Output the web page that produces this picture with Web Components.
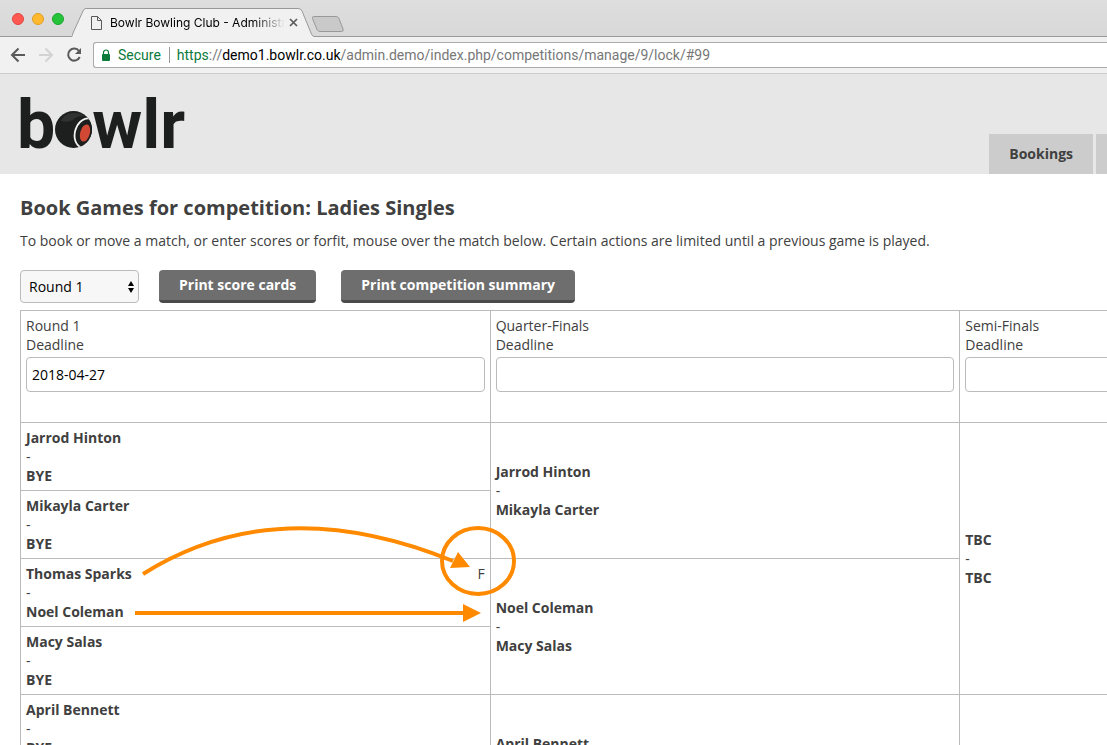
<!DOCTYPE html>
<html lang="en">
<head>
<meta charset="utf-8">
<title>Bowlr Bowling Club - Administration</title>
<style>
	body {
		margin: 0;
		height: 100vh;
		overflow: hidden;
		background: white;
		color: #404040;
		font: 14px/19px "Open Sans", sans-serif;
	}
</style>
</head>
<body>

<browser-window>
	<span slot="title">Bowlr Bowling Club - Administration</span>
	<span slot="scheme">https</span>
	<span slot="host">demo1.bowlr.co.uk</span>
	<span slot="path">/admin.demo/index.php/competitions/manage/9/lock/#99</span>

	<site-header>
		<nav-tab href="#bookings">Bookings</nav-tab>
		<nav-tab href="#more"></nav-tab>
	</site-header>

	<competition-page>
		<span slot="heading">Book Games for competition: Ladies Singles</span>
		<span slot="intro">To book or move a match, or enter scores or forfit, mouse over the match below. Certain actions are limited until a previous game is played.</span>
		<round-select slot="controls"></round-select>
		<push-button slot="controls">Print score cards</push-button>
		<push-button slot="controls">Print competition summary</push-button>
		<competition-draw></competition-draw>
	</competition-page>
</browser-window>

<script>
customElements.define('browser-window',
	class extends HTMLElement
	{
		constructor()
		{
			super();
			const shadowRoot = this.attachShadow({mode: 'open'});

			shadowRoot.innerHTML = `
				<style>
					:host {
						display: block;
					}
					.tabs {
						display: flex;
						height: 37px;
						padding-left: 12px;
						background: linear-gradient(#dedede, #d8d8d8);
						box-shadow: inset 0 -1px #999;
						font: 12px/28px Inter, sans-serif;
						color: black;
					}
					.lights {
						display: flex;
						gap: 8px;
						align-items: center;
						padding-top: 1px;
					}
					.lights i {
						box-sizing: border-box;
						width: 12px;
						height: 12px;
						border: 1px solid #e2463f;
						border-radius: 50%;
						background: #ff5850;
					}
					.lights i:nth-child(2) {
						border-color: #e09e27;
						background: #ffb92e;
					}
					.lights i:nth-child(3) {
						border-color: #1aa62e;
						background: #24c33a;
					}
					.tab {
						display: grid;
						grid-template: 37px / 244px;
						margin-left: 8px;
					}
					.tab > * {
						grid-area: 1 / 1;
					}
					.label {
						display: flex;
						align-items: center;
						padding: 8px 18px 0 19px;
					}
					.title {
						flex: 1;
						margin: 0 4px 0 8px;
						overflow: hidden;
						white-space: nowrap;
						mask-image: linear-gradient(to right, black 82%, transparent);
					}
					button {
						display: flex;
						padding: 0;
						border: 0;
						background: none;
					}
					.new {
						margin: 15px 0 0 -5px;
						align-self: flex-start;
					}
					.toolbar {
						display: flex;
						align-items: center;
						height: 36px;
						padding-left: 10px;
						border-bottom: 1px solid #ccc;
						background: #f1f1f1;
						font: 14px/18px Roboto, sans-serif;
					}
					.toolbar button {
						margin-right: 12px;
					}
					.toolbar button:nth-child(3) {
						margin-right: 11px;
					}
					.address {
						display: flex;
						flex: 1;
						align-items: center;
						height: 24px;
						border: 1px solid #aaa;
						border-right: 0;
						border-radius: 3px 0 0 3px;
						background: white;
						color: #777;
						white-space: nowrap;
					}
					.address svg {
						margin: 0 7px;
					}
					.secure {
						padding-right: 8px;
						margin-right: 7px;
						border-right: 1px solid #999;
						line-height: 16px;
					}
					.secure, .scheme {
						color: #0b7a3b;
					}
					.host {
						color: black;
					}
				</style>
				<div class="tabs">
					<div class="lights"><i></i><i></i><i></i></div>
					<div class="tab">
						<svg width="244" height="37">
							<path d="M0 37 V36.500 Q0 36 1 33 L11 11 Q12 8.500 14 8.500 H226 Q229 8.500 230 11 L239 33 Q240 36 242 36.500 V37 Z" fill="#f1f1f1"/>
							<path d="M0 36.500 Q0 36 1 33 L11 11 Q12 8.500 14 8.500 H226 Q229 8.500 230 11 L239 33 Q240 36 242 36.500 H244" fill="none" stroke="#999"/>
						</svg>
						<div class="label">
							<svg width="11" height="14" fill="none" stroke="#5a5a5a">
								<path d="M1 .5 H6.500 L10.500 4.500 V13.500 H.5 V.5 Z M6.500 .5 V4.500 H10.500"/>
							</svg>
							<span class="title"><slot name="title"></slot></span>
							<button aria-label="Close tab">
								<svg width="9" height="9" stroke="#5a5a5a" stroke-width="1.700"><path d="M1 1 L8 8 M8 1 L1 8"/></svg>
							</button>
						</div>
					</div>
					<button class="new" aria-label="New tab">
						<svg width="34" height="18"><path d="M2.500 1.500 H25 Q27 1.500 28 3.500 L32 14 Q33 16.500 30.500 16.500 H9 Q7 16.500 6 14.500 L1.500 3.500 Q1 1.500 2.500 1.500 Z" fill="#c9c9c9" stroke="#999"/></svg>
					</button>
				</div>
				<div class="toolbar">
					<button aria-label="Back">
						<svg width="16" height="16" fill="none" stroke="#5a5a5a" stroke-width="2"><path d="M15 8 H2.500 M8.500 1.500 L2 8 L8.500 14.500"/></svg>
					</button>
					<button aria-label="Forward">
						<svg width="16" height="16" fill="none" stroke="#d3d3d3" stroke-width="2"><path d="M1 8 H13.500 M7.500 1.500 L14 8 L7.500 14.500"/></svg>
					</button>
					<button aria-label="Reload">
						<svg width="16" height="16"><path d="M13 4 A6 6 0 1 0 13.700 10" fill="none" stroke="#5a5a5a" stroke-width="2"/><path d="M15 1 V7 H9 Z" fill="#5a5a5a"/></svg>
					</button>
					<div class="address" role="textbox" aria-label="Address">
						<svg width="10" height="12"><path d="M2.500 6 V3.500 A2.500 2.500 0 0 1 7.500 3.500 V6" fill="none" stroke="#0b7a3b" stroke-width="1.200"/><rect x="1" y="5" width="8" height="7" rx="1" fill="#0b7a3b"/></svg>
						<span class="secure">Secure</span>
						<span class="scheme"><slot name="scheme"></slot></span><span>://</span><span class="host"><slot name="host"></slot></span><slot name="path"></slot>
					</div>
				</div>
				<slot></slot>
			`;
		}
	}
);

customElements.define('site-header',
	class extends HTMLElement
	{
		constructor()
		{
			super();
			const shadowRoot = this.attachShadow({mode: 'open'});

			shadowRoot.innerHTML = `
				<style>
					:host {
						display: flex;
						justify-content: space-between;
						height: 100px;
						background: #e7e7e7;
					}
					a {
						display: flex;
						align-items: baseline;
						padding: 17px 0 0 17px;
						color: #1d1f1e;
						font: 700 68px/68px Roboto, sans-serif;
						text-decoration: none;
					}
					nav {
						display: flex;
						gap: 3px;
						align-items: flex-end;
					}
				</style>
				<a href="#home" aria-label="bowlr">
					<span>b</span>
					<svg width="37" height="37" viewBox="0 0 37 37">
						<defs><clipPath id="ball"><circle cx="18.500" cy="18.500" r="18.500"/></clipPath></defs>
						<circle cx="18.500" cy="18.500" r="18.500" fill="#1d1f1e"/>
						<path d="M6 10 Q9 2 19 2 Q26 2 29 5 Q21 5 18 9 Q13 12 6 10 Z" fill="#303231"/>
						<g clip-path="url(#ball)">
							<ellipse cx="31" cy="22" rx="11" ry="15" fill="#1d1f1e" stroke="#f1f1f1" stroke-width="1.800" transform="rotate(18 31 22)"/>
						</g>
						<ellipse cx="30" cy="22" rx="4.800" ry="8.800" fill="#d14935" transform="rotate(15 30 22)"/>
					</svg>
					<span>wlr</span>
				</a>
				<nav><slot></slot></nav>
			`;
		}
	}
);

customElements.define('nav-tab',
	class extends HTMLElement
	{
		constructor()
		{
			super();
			const shadowRoot = this.attachShadow({mode: 'open'});

			shadowRoot.innerHTML = `
				<style>
					:host {
						display: block;
						background: #ccc;
					}
					:host(:empty) {
						width: 11px;
						overflow: hidden;
					}
					a {
						display: block;
						height: 40px;
						padding: 0 20px;
						color: #404040;
						font-weight: 700;
						line-height: 40px;
						text-decoration: none;
					}
				</style>
				<a><slot></slot></a>
			`;
		}

		connectedCallback()
		{
			this.shadowRoot.querySelector('a').href = this.getAttribute('href');
		}
	}
);

customElements.define('competition-page',
	class extends HTMLElement
	{
		constructor()
		{
			super();
			const shadowRoot = this.attachShadow({mode: 'open'});

			shadowRoot.innerHTML = `
				<style>
					:host {
						display: block;
						padding: 20px 0 0 20px;
					}
					h1 {
						margin: 0;
						font-size: 20px;
						line-height: 28px;
					}
					p {
						margin: 9px 0 20px;
					}
					.controls {
						display: flex;
						gap: 25px;
						margin-bottom: 7px;
					}
				</style>
				<h1><slot name="heading"></slot></h1>
				<p><slot name="intro"></slot></p>
				<div class="controls"><slot name="controls"></slot></div>
				<slot></slot>
			`;
		}
	}
);

customElements.define('round-select',
	class extends HTMLElement
	{
		constructor()
		{
			super();
			const shadowRoot = this.attachShadow({mode: 'open'});

			shadowRoot.innerHTML = `
				<style>
					:host {
						display: grid;
						width: 119px;
						margin-right: -5px;
					}
					select, svg {
						grid-area: 1 / 1;
					}
					select {
						appearance: none;
						height: 33px;
						padding: 0 8px;
						border: 1px solid #bbb;
						border-radius: 4px;
						background: #f7f7f7;
						color: black;
						font: inherit;
					}
					svg {
						place-self: center end;
						margin-right: 4px;
						pointer-events: none;
					}
				</style>
				<select aria-label="Round">
					<option>Round 1</option>
					<option>Quarter-Finals</option>
					<option>Semi-Finals</option>
				</select>
				<svg width="8" height="12"><path d="M4 0 L7 5 H1 Z M4 12 L7 7 H1 Z"/></svg>
			`;
		}
	}
);

customElements.define('push-button',
	class extends HTMLElement
	{
		constructor()
		{
			super();
			const shadowRoot = this.attachShadow({mode: 'open'});

			shadowRoot.innerHTML = `
				<style>
					:host {
						display: block;
					}
					button {
						height: 33px;
						padding: 0 20px 2px;
						border: 0;
						border-bottom: 3px solid #4a4a4a;
						border-radius: 4px;
						background: #6e6e6e;
						color: white;
						font: inherit;
						font-weight: 700;
					}
				</style>
				<button><slot></slot></button>
			`;
		}
	}
);

customElements.define('round-heading',
	class extends HTMLElement
	{
		constructor()
		{
			super();
			const shadowRoot = this.attachShadow({mode: 'open'});

			shadowRoot.innerHTML = `
				<style>
					:host {
						display: block;
						margin-bottom: 25px;
					}
					label {
						display: block;
					}
					input {
						display: block;
						box-sizing: border-box;
						width: 100%;
						height: 35px;
						margin-top: 3px;
						padding: 0 5px;
						border: 1px solid #bbb;
						border-radius: 4px;
						background: white;
						color: black;
						font: inherit;
					}
				</style>
				<slot></slot>
				<label for="deadline">Deadline</label>
				<input id="deadline" type="text">
			`;
		}

		connectedCallback()
		{
			this.shadowRoot.querySelector('input').value = this.getAttribute('deadline') || '';
		}
	}
);

customElements.define('match-entry',
	class extends HTMLElement
	{
		constructor()
		{
			super();
			const shadowRoot = this.attachShadow({mode: 'open'});

			shadowRoot.innerHTML = `
				<style>
					:host {
						display: block;
					}
					.player {
						display: flex;
						justify-content: space-between;
						font-weight: 700;
					}
					::slotted([slot=result]) {
						font-weight: 400;
					}
				</style>
				<div class="player"><slot name="home"></slot><slot name="result"></slot></div>
				<div>-</div>
				<div class="player"><slot name="away"></slot></div>
			`;
		}
	}
);

customElements.define('competition-draw',
	class extends HTMLElement
	{
		constructor()
		{
			super();
			const shadowRoot = this.attachShadow({mode: 'open'});

			// each match: [rows spanned, home, away, result of home player]
			const rows = [
				[[1, 'Jarrod Hinton', 'BYE'], [2, 'Jarrod Hinton', 'Mikayla Carter'], [4, 'TBC', 'TBC']],
				[[1, 'Mikayla Carter', 'BYE']],
				[[1, 'Thomas Sparks', 'Noel Coleman', 'F'], [2, 'Noel Coleman', 'Macy Salas']],
				[[1, 'Macy Salas', 'BYE']],
				[[1, 'April Bennett', 'BYE'], [2, 'April Bennett', 'TBC'], [2]],
				[[1, 'TBC', 'BYE']],
			];

			shadowRoot.innerHTML = `
				<style>
					:host {
						display: block;
						position: relative;
					}
					/* three wide rounds, the last one runs off the window */
					table {
						width: calc(127vw + 4px);
						border-collapse: collapse;
						table-layout: fixed;
					}
					th, td {
						padding: 5px;
						border: 1px solid #bbb;
						text-align: left;
						font-weight: 400;
					}
					.marks {
						position: absolute;
						top: 0;
						left: 0;
						pointer-events: none;
					}
				</style>
				<table>
					<thead>
						<tr>
							<th><round-heading deadline="2018-04-27">Round 1</round-heading></th>
							<th><round-heading>Quarter-Finals</round-heading></th>
							<th><round-heading>Semi-Finals</round-heading></th>
						</tr>
					</thead>
					<tbody>${rows.map(row => `<tr>${row.map(m => this.cell(m)).join('')}</tr>`).join('')}</tbody>
				</table>
				<svg class="marks" width="520" height="340" fill="none" stroke="#ff8a00" stroke-width="4">
					<path d="M123 264 C220 203 325 207 433 251"/>
					<path d="M430 258 L438 242 L450 257 Z" fill="#ff8a00" stroke="none"/>
					<ellipse cx="458" cy="251" rx="36" ry="33"/>
					<path d="M115 303 H444"/>
					<path d="M443 294 L461 303 L443 312 Z" fill="#ff8a00" stroke="none"/>
				</svg>
			`;
		}

		cell([span, home, away, result])
		{
			if (!home) {
				return `<td rowspan="${span}"></td>`;
			}

			return `
				<td rowspan="${span}">
					<match-entry>
						<span slot="home">${home}</span>
						<span slot="away">${away}</span>
						${result ? `<span slot="result">${result}</span>` : ''}
					</match-entry>
				</td>
			`;
		}
	}
);
</script>
</body>
</html>
